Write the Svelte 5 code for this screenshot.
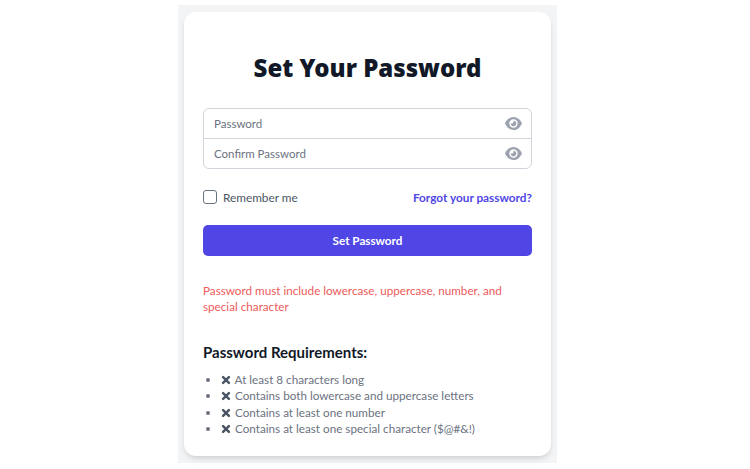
<script>
  const requirements = [
    'At least 8 characters long',
    'Contains both lowercase and uppercase letters',
    'Contains at least one number',
    'Contains at least one special character ($@#&!)'
  ];
</script>

{#snippet eye()}
  <svg class="eye" viewBox="0 0 576 512" width="17" height="15" aria-hidden="true">
    <path fill="#9ca3af" d="M288 32C207 32 142 69 95 113 48 156 17 208 2 244c-3 8-3 16 0 24 15 36 46 88 93 131 47 44 112 81 193 81s146-37 193-81c47-43 78-95 93-131 3-8 3-16 0-24-15-36-46-88-93-131C434 69 369 32 288 32zM144 256a144 144 0 1 1 288 0 144 144 0 1 1-288 0zm144-64c0 35-29 64-64 64-7 0-14-1-20-3-6-2-12 2-12 8 0 7 1 14 3 21 14 51 67 82 118 68s82-67 68-118c-11-42-48-69-89-71-6 0-9 6-7 12 2 6 3 12 3 19z"/>
  </svg>
{/snippet}

<div class="page">
  <div class="panel">
    <div class="card">
      <h1>Set Your Password</h1>

      <div class="fields">
        <div class="field">
          <input type="password" placeholder="Password" />
          {@render eye()}
        </div>
        <div class="field">
          <input type="password" placeholder="Confirm Password" />
          {@render eye()}
        </div>
      </div>

      <div class="options">
        <label class="remember">
          <input type="checkbox" />
          <span>Remember me</span>
        </label>
        <a href="#forgot">Forgot your password?</a>
      </div>

      <button type="button" class="submit">Set Password</button>

      <p class="error">Password must include lowercase, uppercase, number, and special character</p>

      <h2>Password Requirements:</h2>
      <ul>
        {#each requirements as req}
          <li>
            <svg class="cross" viewBox="0 0 12 12" width="10" height="10" aria-hidden="true">
              <path d="M2.5 2.5l7 7M9.5 2.5l-7 7" stroke="#4b5563" stroke-width="3" stroke-linecap="round" fill="none"/>
            </svg>
            {req}
          </li>
        {/each}
      </ul>
    </div>
  </div>
</div>

<style>
  :global(body) {
    margin: 0;
    background: #fff;
    font-family: Lato, "Noto Sans", sans-serif;
  }

  .page {
    height: 469px;
    display: flex;
    justify-content: center;
    box-sizing: border-box;
    padding: 5px 15px 6px 0;
  }

  .panel {
    width: 379px;
    box-sizing: border-box;
    background: #f3f4f6;
    padding: 7px 6px;
  }

  .card {
    background: #fff;
    border-radius: 12px;
    box-shadow: 0 4px 6px -1px rgba(0, 0, 0, 0.1), 0 2px 4px -2px rgba(0, 0, 0, 0.1);
    padding: 40px 19px 0;
    height: 444px;
    box-sizing: border-box;
  }

  h1 {
    margin: 0;
    font-family: "Noto Sans", sans-serif;
    font-size: 24px;
    line-height: 32px;
    font-weight: 900;
    color: #111827;
    text-align: center;
  }

  .fields {
    margin-top: 24px;
    border: 1px solid #d1d5db;
    border-radius: 6px;
  }

  .field {
    height: 29px;
    display: flex;
    align-items: center;
    padding: 0 9px 0 10px;
  }

  .field + .field {
    border-top: 1px solid #d1d5db;
  }

  .field input {
    flex: 1;
    min-width: 0;
    border: 0;
    outline: 0;
    padding: 0;
    background: none;
    font: inherit;
    font-size: 11.5px;
  }

  .field input::placeholder {
    color: #6b7280;
    opacity: 1;
  }

  .options {
    margin-top: 19px;
    display: flex;
    justify-content: space-between;
    align-items: center;
    font-size: 11.8px;
    height: 18px;
  }

  .remember {
    display: flex;
    align-items: center;
    gap: 6px;
    color: #4b5563;
  }

  .remember input {
    appearance: none;
    width: 14px;
    height: 14px;
    margin: 0;
    border: 1px solid #6b7280;
    border-radius: 3px;
    background: #fff;
  }

  .options a {
    color: #4f46e5;
    font-weight: 700;
    text-decoration: none;
  }

  .submit {
    display: block;
    width: 100%;
    margin-top: 19px;
    height: 31px;
    padding: 0 0 2px;
    border: 0;
    border-radius: 5px;
    background: #4f46e5;
    color: #fff;
    font: inherit;
    font-size: 11.7px;
    font-weight: 700;
  }

  .error {
    margin: 26px 0 0;
    font-size: 11.7px;
    line-height: 16px;
    color: #ec5a5a;
  }

  h2 {
    margin: 28px 0 0;
    font-size: 15px;
    line-height: 20px;
    font-weight: 700;
    color: #111827;
  }

  ul {
    margin: 9px 0 0;
    padding: 0 0 0 18px;
    list-style: disc;
    font-size: 11.7px;
    line-height: 16.4px;
    color: #6b7280;
  }

  .cross {
    vertical-align: -1px;
    margin-right: 1px;
  }
</style>
